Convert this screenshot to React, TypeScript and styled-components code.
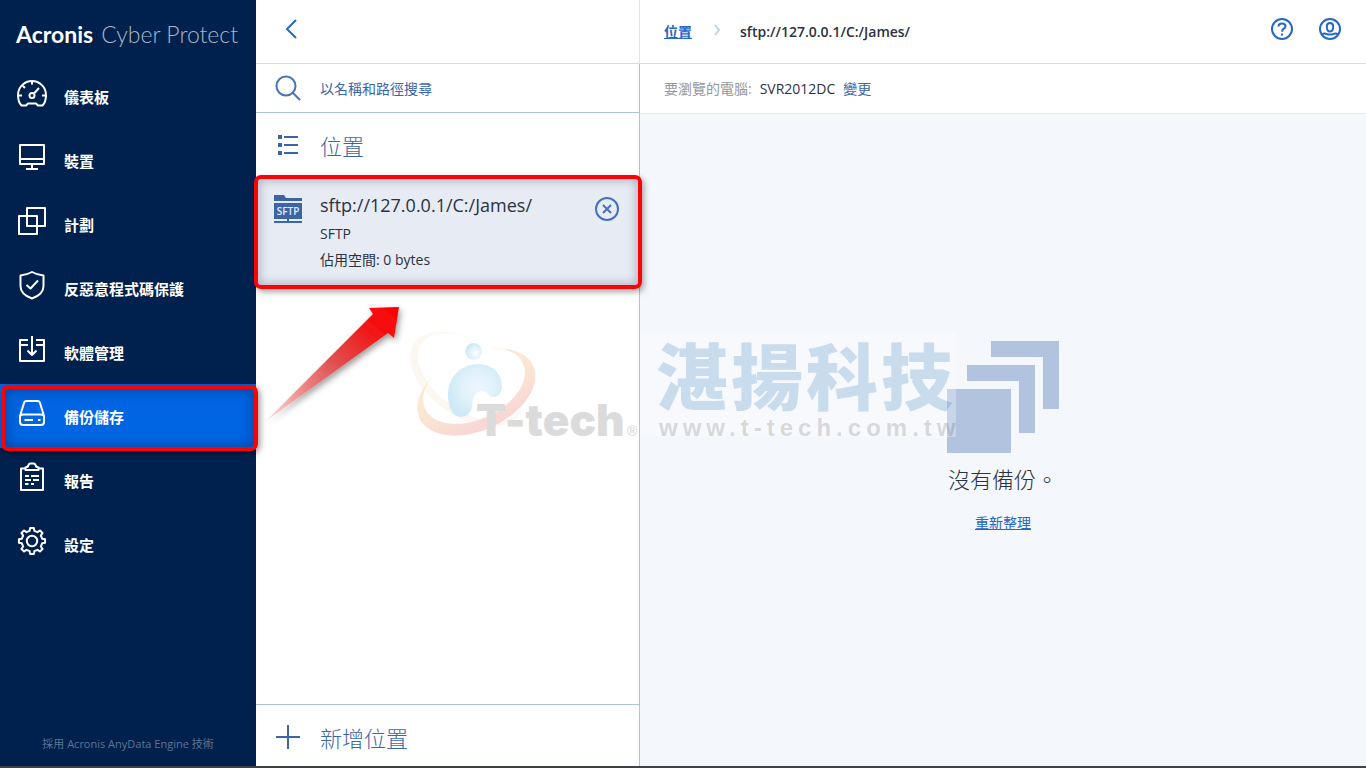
import React from "react";
import styled, { createGlobalStyle, css } from "styled-components";

const GlobalStyle = createGlobalStyle`
  *, *::before, *::after { box-sizing: border-box; }
  body {
    margin: 0;
    font-family: "Open Sans", "Noto Sans CJK TC", sans-serif;
    font-size: 14px;
    line-height: 20px;
    color: #2b3240;
    background: #fff;
  }
  button, input { font: inherit; }
`;

const Page = styled.div`
  position: relative;
  display: grid;
  grid-template-columns: 256px 384px minmax(0, 1fr);
  min-height: 100vh;
  border-bottom: 2px solid #3c4245;
`;

/* ---------- sidebar ---------- */

const Sidebar = styled.aside`
  display: flex;
  flex-direction: column;
  background: #00204d;
  color: #fff;
`;

const Brand = styled.div`
  display: flex;
  align-items: baseline;
  gap: 8px;
  height: 64px;
  padding: 20px 16px 0;
  font-family: Lato, sans-serif;
  font-size: 23px;
  line-height: 28px;
  white-space: nowrap;
`;

const BrandName = styled.span`
  font-weight: 700;
`;

const BrandProduct = styled.span`
  font-weight: 300;
  color: #a9b7cb;
`;

const Nav = styled.nav`
  flex: 1;
`;

const frame = css`
  content: "";
  position: absolute;
  border: 4px solid #fb0207;
  border-radius: 7px;
  pointer-events: none;
`;

const NavLink = styled.a<{ $active?: boolean }>`
  position: relative;
  z-index: 3;
  display: flex;
  gap: 16px;
  height: 64px;
  padding: 14px 16px 0;
  color: #fff;
  font-size: 15px;
  font-weight: 700;
  line-height: 38px;
  text-decoration: none;
  ${(p) =>
    p.$active &&
    css`
      background: #0065e3;
      &::after {
        ${frame}
        inset: 1px -2px -3px 1px;
        box-shadow: inset 0 0 12px 2px rgba(0, 32, 77, 0.4), 2px 2px 6px rgba(0, 0, 0, 0.4);
      }
    `}
`;

const NavIcon = styled.svg`
  flex: none;
  width: 32px;
  height: 32px;
  fill: none;
  stroke: currentColor;
  stroke-width: 2;
  stroke-linejoin: round;
`;

const Powered = styled.footer`
  padding: 0 16px 14px;
  color: #5f7595;
  font-size: 11px;
  line-height: 16px;
  text-align: center;
`;

/* ---------- locations panel ---------- */

const Panel = styled.section`
  display: flex;
  flex-direction: column;
  background: #fff;
`;

const PanelTop = styled.div`
  height: 64px;
  padding: 13px 19px 0;
  border-right: 1px solid #dbe4f3;
  border-bottom: 1px solid #cfdcf0;
`;

const IconButton = styled.button<{ $size: number }>`
  display: flex;
  align-items: center;
  justify-content: center;
  flex: none;
  width: ${(p) => p.$size}px;
  height: ${(p) => p.$size}px;
  padding: 0;
  border: 0;
  background: none;
  color: #2668c5;
  cursor: pointer;
`;

const RemoveButton = styled(IconButton)`
  margin-top: 4px;
  color: #4472b8;
`;

const PanelBody = styled.div`
  flex: 1;
  display: flex;
  flex-direction: column;
  border-right: 1px solid #b0c2e0;
`;

const SearchRow = styled.label`
  display: flex;
  align-items: center;
  gap: 16px;
  height: 49px;
  padding: 0 16px;
  border-bottom: 1px solid #abc0de;
  color: #4674b8;
`;

const SearchInput = styled.input`
  flex: 1;
  min-width: 0;
  height: 24px;
  padding: 0;
  border: 0;
  outline: 0;
  background: none;
  color: #3a66a8;
  &::placeholder {
    color: #3a66a8;
    opacity: 1;
  }
`;

const PanelHeading = styled.div`
  display: flex;
  align-items: center;
  gap: 16px;
  height: 63px;
  padding: 0 16px;
  color: #3a66a8;
`;

const HeadingText = styled.h2`
  margin: 0;
  padding-top: 2px;
  font-size: 22px;
  font-weight: 300;
  line-height: 32px;
`;

const LineIcon = styled.svg`
  flex: none;
  fill: none;
  stroke: currentColor;
  stroke-width: 2;
`;

const SolidIcon = styled.svg`
  flex: none;
  fill: #3a66a8;
`;

const Location = styled.article`
  position: relative;
  z-index: 2;
  display: flex;
  align-items: flex-start;
  gap: 16px;
  height: 112px;
  padding: 17px 20px 0 16px;
  background: #e7ebf4;
  &::after {
    ${frame}
    inset: -1px -3px -1px -2px;
    box-shadow: inset 0 0 10px 2px rgba(60, 64, 80, 0.3), 2px 3px 6px rgba(0, 0, 0, 0.35);
  }
`;

const LocationInfo = styled.div`
  flex: 1;
  display: flex;
  flex-direction: column;
`;

const LocationName = styled.div`
  margin-bottom: 7px;
  font-size: 18px;
  line-height: 24px;
`;

const LocationLine = styled.div`
  height: 26px;
  line-height: 20px;
`;

const ArrowMark = styled.svg`
  position: absolute;
  left: 8px;
  top: 124px;
  overflow: visible;
  pointer-events: none;
`;

const AddRow = styled.button`
  display: flex;
  align-items: center;
  gap: 16px;
  height: 62px;
  margin-top: auto;
  padding: 2px 16px 0;
  border: 0;
  border-top: 1px solid #b0c2e0;
  background: none;
  color: #3a66a8;
  cursor: pointer;
`;

const AddText = styled.span`
  padding-top: 2px;
  font-size: 22px;
  font-weight: 300;
  line-height: 32px;
`;

/* ---------- content ---------- */

const Content = styled.main`
  display: flex;
  flex-direction: column;
  background: #f4f7fc;
`;

const TopBar = styled.header`
  display: flex;
  align-items: center;
  justify-content: space-between;
  height: 64px;
  padding: 0 24px;
  border-bottom: 1px solid #cfdcf0;
  background: #fff;
`;

const Crumbs = styled.nav`
  display: flex;
  align-items: center;
  font-weight: 600;
`;

const CrumbLink = styled.a`
  color: #2668c5;
  font-weight: 700;
  text-underline-offset: 1px;
`;

const CrumbArrow = styled.svg`
  width: 8px;
  height: 12px;
  margin: 0 19px 4px 21px;
  fill: none;
  stroke: #c1d0ea;
  stroke-width: 2;
`;

const Actions = styled.div`
  display: flex;
  gap: 24px;
  padding-bottom: 5px;
`;

const MachineBar = styled.div`
  display: flex;
  align-items: center;
  gap: 8px;
  height: 50px;
  padding: 0 24px;
  border-bottom: 1px solid #e3eaf4;
  background: #fff;
`;

const Muted = styled.span`
  color: #93979f;
`;

const ChangeLink = styled.a`
  color: #3a66a8;
  text-decoration: none;
`;

const Empty = styled.div`
  flex: 1;
  display: flex;
  flex-direction: column;
  align-items: center;
  justify-content: center;
  padding-bottom: 6px;
`;

const EmptyText = styled.p`
  margin: 10px 0 18px;
  font-size: 22px;
  font-weight: 300;
  line-height: 32px;
`;

const RefreshLink = styled.a`
  color: #2668c5;
  text-underline-offset: 1px;
`;

const Watermark = styled.svg`
  position: absolute;
  z-index: 1;
  left: 50%;
  top: 332px;
  transform: translateX(-50%);
  overflow: visible;
  pointer-events: none;
`;

const gearPath = (() => {
  const points: string[] = [];
  for (let i = 0; i < 8; i++) {
    const steps: [number, number][] = [
      [-13, 10.4],
      [-8, 13.2],
      [8, 13.2],
      [13, 10.4],
    ];
    steps.forEach(([offset, radius]) => {
      const a = ((i * 45 + offset) * Math.PI) / 180;
      points.push(`${(16 + radius * Math.sin(a)).toFixed(2)} ${(15 - radius * Math.cos(a)).toFixed(2)}`);
    });
  }
  return `M${points.join("L")}Z`;
})();

const navItems: { label: string; active?: boolean; icon: React.ReactNode }[] = [
  {
    label: "儀表板",
    icon: (
      <>
        <path d="M10 27.5H5.5C3 25 2 21.500 2 17A14 14 0 0 1 30 17C30 21.500 29 25 26.500 27.500H22L20 25.500H12Z" />
        <path d="M16 3v3.500M2 17.500h4M26 17.500h4M6.500 7.500l2.500 2.500M18 15.500l5-5.500" />
        <circle cx="16" cy="17.500" r="2.500" />
      </>
    ),
  },
  {
    label: "裝置",
    icon: <path d="M4 3h24v19H4ZM4 17h24M16 22v5M10 27h12" />,
  },
  {
    label: "計劃",
    icon: (
      <>
        <rect x="11" y="2" width="18" height="18" />
        <rect x="3" y="10" width="18" height="18" />
      </>
    ),
  },
  {
    label: "反惡意程式碼保護",
    icon: (
      <path d="M16 2c3.500 2 7 3 11.500 3.500v10.500c0 6-4.500 10-11.500 12.500c-7-2.500-11.500-6.500-11.500-12.500V5.500C9 5 12.500 4 16 2ZM10.500 15l4 3.500l7.500-8" />
    ),
  },
  {
    label: "軟體管理",
    icon: <path d="M12 6H4V27h24V6h-8M4 11h8M20 11h8M16 2v19M11.500 16.500l4.500 4.500l4.500-4.500" />,
  },
  {
    label: "備份儲存",
    active: true,
    icon: (
      <>
        <path d="M4 18L8 5q.500-2 2.500-2h11q2 0 2.500 2l4 13v6q0 3-3 3H7q-3 0-3-3ZM4.500 17.500q1-1 2.500-1h18q1.500 0 2.500 1" />
        <path d="M8.500 22h8.500M22 22h2.500" />
      </>
    ),
  },
  {
    label: "報告",
    icon: (
      <>
        <path d="M9 6.500H5V28h22V6.500h-4" />
        <path d="M9.500 8V5.500L12 4.500q.500-3 2.500-3h3q2 0 2.500 3l2.500 1V8Z" />
        <path d="M9 14h4M15 14h8M9 18h6M17 18h6M9 22h3.500M15 22h3" />
      </>
    ),
  },
  {
    label: "設定",
    icon: (
      <>
        <path d={gearPath} />
        <circle cx="16" cy="15" r="5.200" />
      </>
    ),
  },
];

function SftpIcon() {
  return (
    <SolidIcon width="32" height="32" viewBox="0 0 32 32" aria-hidden="true">
      <path d="M2 2h10l2 3h16v3H2ZM2 10h28v16H17v2h13v2H2v-2h13v-2H2Z" />
      <text x="16" y="22" fill="#e7ebf4" fontFamily="Open Sans, sans-serif" fontSize="10" fontWeight="600" textAnchor="middle">
        SFTP
      </text>
    </SolidIcon>
  );
}

function Arrow() {
  return (
    <ArrowMark width="136" height="120" viewBox="0 0 136 120" aria-hidden="true">
      <defs>
        <linearGradient id="arrowFill" x1="0" y1="1" x2="1" y2="0">
          <stop offset="0" stopColor="#ff9a9a" stopOpacity="0.3" />
          <stop offset="0.25" stopColor="#f08080" stopOpacity="0.85" />
          <stop offset="0.5" stopColor="#e05252" />
          <stop offset="0.8" stopColor="#f21414" />
          <stop offset="1" stopColor="#ff0000" />
        </linearGradient>
        <filter id="arrowShadow" x="-20%" y="-20%" width="140%" height="140%">
          <feDropShadow dx="2" dy="3" stdDeviation="3" floodColor="#000" floodOpacity="0.4" />
        </filter>
      </defs>
      <path d="M2 121L109 14L105 8L135 7L130 38L124 33Z" fill="url(#arrowFill)" filter="url(#arrowShadow)" />
    </ArrowMark>
  );
}

function CompanyWatermark() {
  return (
    <Watermark width="546" height="105" viewBox="0 0 546 105" aria-hidden="true">
      <defs>
        <linearGradient id="ringFill" x1="0" y1="0" x2="0" y2="1">
          <stop offset="0" stopColor="#fbecd2" />
          <stop offset="0.5" stopColor="#fae6d3" />
          <stop offset="1" stopColor="#f8d5d5" />
        </linearGradient>
        <radialGradient id="beanFill" cx="0.55" cy="0.45" r="0.55">
          <stop offset="0" stopColor="#eef6fc" />
          <stop offset="0.5" stopColor="#e2f2fa" />
          <stop offset="1" stopColor="#cdeaf7" />
        </radialGradient>
        <radialGradient id="dotFill" cx="0.6" cy="0.6" r="0.6">
          <stop offset="0" stopColor="#fff" />
          <stop offset="1" stopColor="#c9e8f6" />
        </radialGradient>
        <mask id="ringHole" maskUnits="userSpaceOnUse" x="400" y="0" width="600" height="600">
          <rect x="400" y="0" width="600" height="600" fill="#fff" />
          <ellipse cx="672" cy="288" rx="162" ry="100" transform="rotate(-25 672 288)" fill="#000" />
        </mask>
        <mask id="haloHole" maskUnits="userSpaceOnUse" x="400" y="0" width="600" height="600">
          <rect x="400" y="0" width="600" height="600" fill="#fff" />
          <ellipse cx="661" cy="262" rx="178" ry="102" transform="rotate(35 661 262)" fill="#000" />
        </mask>
      </defs>
      <rect x="230" width="316" height="105" fill="#fff" fillOpacity="0.3" />
      <g transform="translate(-160 -42) scale(0.3333)">
        <g mask="url(#haloHole)">
          <ellipse cx="649" cy="267" rx="190" ry="112" transform="rotate(35 649 267)" fill="#fdf7f1" />
        </g>
        <g mask="url(#ringHole)">
          <ellipse cx="679" cy="306" rx="188" ry="115" transform="rotate(-25 679 306)" fill="url(#ringFill)" />
        </g>
        <circle cx="671" cy="184" r="25" fill="url(#dotFill)" />
        <path
          d="M594 320C592 265 630 222 685 222C730 222 756 255 756 288C756 305 748 316 738 320H722C712 306 700 300 688 305C672 312 668 328 667 345C664 370 650 381 633 381C606 381 595 350 594 320Z"
          fill="url(#beanFill)"
        />
      </g>
      <text x="66" y="104" fontSize="44" fontFamily="Inter, sans-serif" fontWeight="900" fill="#dbdbdb">
        T-tech
      </text>
      <text x="217" y="104" fontSize="14" fontFamily="Liberation Sans, sans-serif" fill="#d4d4d4">
        ®
      </text>
      <text
        x="246"
        y="72"
        fontSize="72"
        fontWeight="900"
        letterSpacing="3"
        fontFamily="Noto Sans CJK TC, sans-serif"
        fill="#166bb1"
        fillOpacity="0.2"
      >
        湛揚科技
      </text>
      <text
        x="249"
        y="104"
        fontSize="24"
        fontWeight="700"
        letterSpacing="5"
        fontFamily="Liberation Sans, sans-serif"
        fill="#504a48"
        fillOpacity="0.2"
      >
        www.t-tech.com.tw
      </text>
    </Watermark>
  );
}

export default function App() {
  return (
    <>
      <GlobalStyle />
      <Page>
        <Sidebar>
          <Brand>
            <BrandName>Acronis</BrandName>
            <BrandProduct>Cyber Protect</BrandProduct>
          </Brand>
          <Nav>
            {navItems.map((item) => (
              <NavLink key={item.label} href="#" $active={item.active}>
                <NavIcon viewBox="0 0 32 32" aria-hidden="true">
                  {item.icon}
                </NavIcon>
                {item.label}
              </NavLink>
            ))}
          </Nav>
          <Powered>採用 Acronis AnyData Engine 技術</Powered>
        </Sidebar>

        <Panel>
          <PanelTop>
            <IconButton $size={32} aria-label="Back">
              <LineIcon width="32" height="32" viewBox="0 0 32 32">
                <path d="M21 7L12 16L21 25" />
              </LineIcon>
            </IconButton>
          </PanelTop>
          <PanelBody>
            <SearchRow>
              <LineIcon width="32" height="32" viewBox="0 0 32 32" aria-hidden="true">
                <circle cx="14" cy="14" r="9.500" />
                <path d="M21 21l7 7" />
              </LineIcon>
              <SearchInput type="text" placeholder="以名稱和路徑搜尋" aria-label="以名稱和路徑搜尋" />
            </SearchRow>
            <PanelHeading>
              <LineIcon width="32" height="32" viewBox="0 0 32 32" aria-hidden="true">
                <path d="M6 8h4M6 16h4M6 24h4" strokeWidth="4" />
                <path d="M12 8h14M12 16h14M12 24h14" />
              </LineIcon>
              <HeadingText>位置</HeadingText>
            </PanelHeading>
            <Location>
              <SftpIcon />
              <LocationInfo>
                <LocationName>sftp://127.0.0.1/C:/James/</LocationName>
                <LocationLine>SFTP</LocationLine>
                <LocationLine>佔用空間: 0 bytes</LocationLine>
              </LocationInfo>
              <RemoveButton $size={24} aria-label="Remove">
                <LineIcon width="24" height="24" viewBox="0 0 24 24">
                  <circle cx="12" cy="12" r="11" />
                  <path d="M8 8l8 8M16 8l-8 8" />
                </LineIcon>
              </RemoveButton>
              <Arrow />
            </Location>
            <AddRow>
              <LineIcon width="32" height="32" viewBox="0 0 32 32" aria-hidden="true">
                <path d="M16 4v24M4 16h24" />
              </LineIcon>
              <AddText>新增位置</AddText>
            </AddRow>
          </PanelBody>
        </Panel>

        <Content>
          <TopBar>
            <Crumbs>
              <CrumbLink href="#">位置</CrumbLink>
              <CrumbArrow viewBox="0 0 8 12" aria-hidden="true">
                <path d="M2 1l4 5l-4 5" />
              </CrumbArrow>
              <span>sftp://127.0.0.1/C:/James/</span>
            </Crumbs>
            <Actions>
              <IconButton $size={24} aria-label="Help">
                <LineIcon width="24" height="24" viewBox="0 0 24 24">
                  <circle cx="12" cy="12" r="10" />
                  <path d="M8.500 9.500q0-3 3.500-3t3.500 2.700q0 1.500-1.700 2.500t-1.700 3M12 16.500v2" />
                </LineIcon>
              </IconButton>
              <IconButton $size={24} aria-label="Account">
                <LineIcon width="24" height="24" viewBox="0 0 24 24">
                  <circle cx="12" cy="12" r="10" />
                  <path d="M12 6q3.200 0 3.200 3.500q0 5-3.200 5t-3.200-5Q8.800 6 12 6ZM4 17.500q2-1.500 4.500-.500q3.500 1.200 7 0q2.500-1 4.500.500" />
                </LineIcon>
              </IconButton>
            </Actions>
          </TopBar>
          <MachineBar>
            <Muted>要瀏覽的電腦:</Muted>
            <span>SVR2012DC</span>
            <ChangeLink href="#">變更</ChangeLink>
          </MachineBar>
          <Empty>
            <svg width="112" height="112" viewBox="0 0 112 112" fill="#b1c3de" aria-hidden="true">
              <path d="M0 48h64v64H0ZM20 24h68v68H72V40H20ZM44 0h68v68H96V16H44Z" />
            </svg>
            <EmptyText>沒有備份。</EmptyText>
            <RefreshLink href="#">重新整理</RefreshLink>
          </Empty>
        </Content>

        <CompanyWatermark />
      </Page>
    </>
  );
}
